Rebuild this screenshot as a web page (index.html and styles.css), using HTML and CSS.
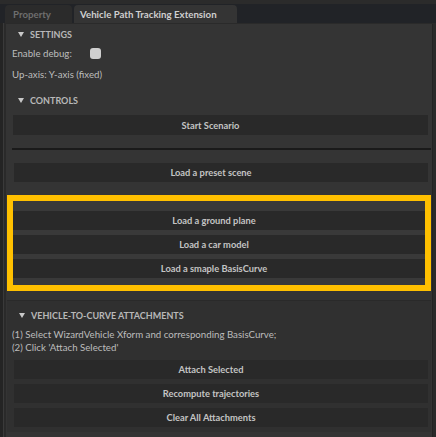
FILE: index.html
```html
<!DOCTYPE html>
<html>
<head>
<meta charset="utf-8">
<link rel="stylesheet" href="styles.css">
</head>
<body>
<div class="window">
  <div class="tabbar">
    <div class="tab inactive">Property</div>
    <div class="tab active">Vehicle Path Tracking Extension</div>
  </div>
  <div class="panel">
    <div class="header hdr-settings"><span class="tri"></span>SETTINGS</div>
    <div class="row row-debug">Enable debug:<span class="checkbox"></span></div>
    <div class="row row-axis">Up-axis: Y-axis (fixed)</div>
    <div class="header hdr-controls"><span class="tri"></span>CONTROLS</div>
    <div class="btn btn-start">Start Scenario</div>
    <div class="separator"></div>
    <div class="btn btn-preset">Load a preset scene</div>
    <div class="highlight">
      <div class="btn">Load a ground plane</div>
      <div class="btn">Load a car model</div>
      <div class="btn">Load a smaple BasisCurve</div>
    </div>
    <div class="section">
      <div class="header hdr-attach"><span class="tri"></span>VEHICLE-TO-CURVE ATTACHMENTS</div>
      <div class="note">(1) Select WizardVehicle Xform and corresponding BasisCurve;<br>(2) Click 'Attach Selected'</div>
      <div class="btns">
        <div class="btn">Attach Selected</div>
        <div class="btn">Recompute trajectories</div>
        <div class="btn">Clear All Attachments</div>
      </div>
    </div>
  </div>
</div>
</body>
</html>
```

FILE: styles.css
```css
* { box-sizing: border-box; }
html, body {
  margin: 0;
  padding: 0;
  background: #262626;
  width: 436px;
  height: 437px;
  overflow: hidden;
  font-family: "Lato", "Open Sans", sans-serif;
  font-size: 9.7px;
  color: #bdbdbd;
}
.window {
  display: flex;
  flex-direction: column;
  height: 437px;
  border-left: 3px solid #242424;
  padding-left: 2px;
  background: linear-gradient(to right, #3a3a3a 0 1px, #2a2a2a 1px);
}
.tabbar {
  height: 23px;
  background: #212327;
  display: flex;
  align-items: flex-end;
  gap: 2px;
  margin-left: -5px;
  padding-left: 5px;
  border-top: 4px solid #2b2b2b;
}
.tab {
  height: 18px;
  line-height: 18px;
  border-radius: 4px 4px 0 0;
  font-weight: 700;
  font-size: 9.7px;
}
.tab.inactive {
  width: 67px;
  padding-left: 8px;
  background: #2b2b2b;
  color: #6e6e6e;
}
.tab.active {
  width: 163px;
  padding-left: 6px;
  background: #343434;
  color: #cfcfcf;
}
.panel {
  flex: 1;
  margin-top: 1px;
  margin-right: 3px;
  margin-left: 1px;
  background: #343434;
  border-right: 1px solid #232323;
  display: flex;
  flex-direction: column;
}
.header {
  height: 18px;
  display: flex;
  align-items: center;
  padding-left: 12px;
  font-weight: 700;
  font-size: 9px;
  color: #b8b8b8;
}
.tri {
  width: 0;
  height: 0;
  border-left: 3px solid transparent;
  border-right: 3px solid transparent;
  border-top: 5px solid #c8c8c8;
  margin-right: 6px;
}
.hdr-settings { margin-top: 1px; }
.row {
  height: 14px;
  display: flex;
  align-items: center;
  padding-left: 6px;
  color: #bdbdbd;
}
.row-debug { margin-top: 3px; }
.row-axis { margin-top: 7px; }
.checkbox {
  width: 11px;
  height: 11px;
  border-radius: 3px;
  background: #cfcfcf;
  margin-left: 18px;
}
.hdr-controls { margin-top: 10px; }
.btn {
  height: 20px;
  display: flex;
  align-items: center;
  justify-content: center;
  padding-right: 20px;
  background: #292929;
  color: #c4c4c4;
  font-weight: 700;
  font-size: 9.3px;
}
.btn-start { margin: 6px 4px 0 7px; }
.separator {
  height: 2px;
  margin: 13px 1px 0 6px;
  background: #1a1a1a;
}
.btn-preset { margin: 13px 4px 0 8px; height: 19px; }
.highlight {
  margin: 13px 1px 0 1px;
  border: 6px solid #ffc000;
  background: #393939;
  padding: 10px 0 7px;
  display: flex;
  flex-direction: column;
  gap: 5px;
}
.highlight .btn { height: 19px; padding-right: 10px; }
.section {
  margin: 9px 1px 5px 1px;
  border-top: 1px solid #2a2a2a;
  background: #303030;
  flex: 1;
  display: flex;
  flex-direction: column;
}
.hdr-attach { margin-top: 5px; }
.note {
  margin-top: 4px;
  padding-left: 5px;
  line-height: 13px;
  color: #bdbdbd;
}
.btns {
  margin-top: 6px;
  padding: 0 3px 0 7px;
  display: flex;
  flex-direction: column;
  gap: 5px;
}
.btns .btn { height: 19px; }
```
